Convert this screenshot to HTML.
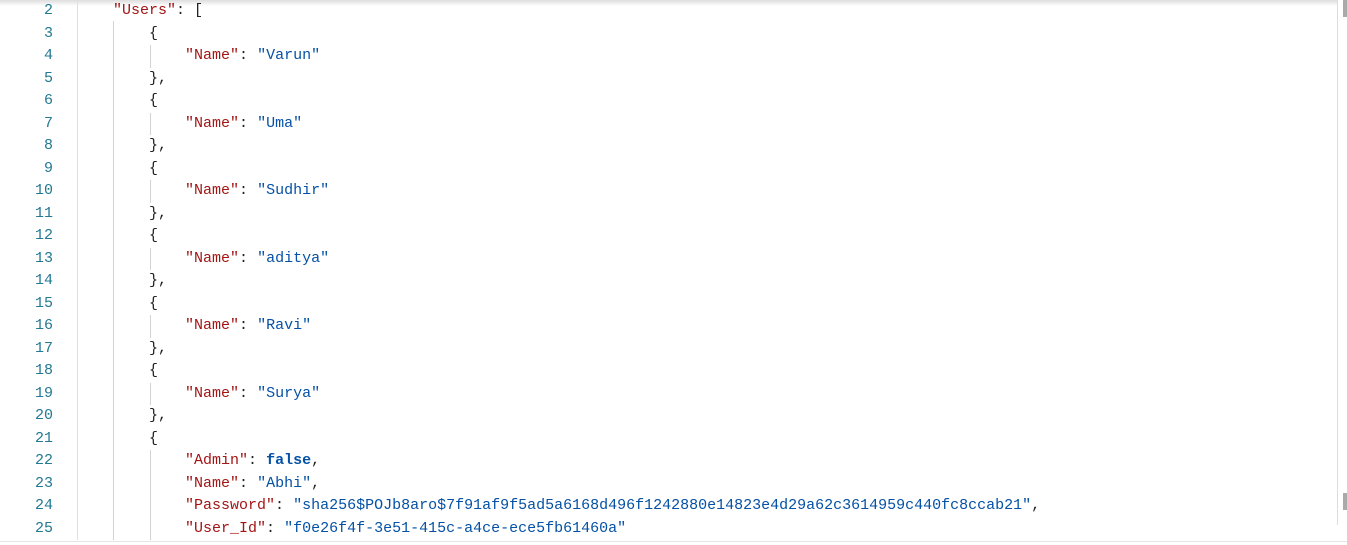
<!DOCTYPE html>
<html><head><style>
html,body{margin:0;padding:0;width:1347px;height:545px;overflow:hidden;background:#fff;}
.top{position:absolute;left:0;top:0;width:1337px;height:6px;background:linear-gradient(#ddd,#fff);}
.gutter{position:absolute;left:0;top:0;width:77px;height:540px;border-right:1px solid #e0e0e0;}
.ln{position:absolute;left:0;width:53px;text-align:right;color:#237893;}
.code{position:absolute;left:0;}
.row{position:absolute;height:22.5px;line-height:22.5px;font-family:"Liberation Mono",monospace;font-size:15px;white-space:pre;}
.k{color:#a31515;}.s{color:#0451a5;}.b{color:#0451a5;font-weight:bold;}.p{color:#222;}
.guide{position:absolute;width:1px;background:#d3d3d3;}
.sb{position:absolute;left:1337px;top:0;width:1px;height:525px;background:#ddd;}
.th{position:absolute;left:1343px;width:4px;height:17px;background:#aaa;}
.bot{position:absolute;left:0;top:541px;width:1347px;height:1px;background:#e5e5e5;}
</style></head><body>
<div class="top"></div>
<div class="gutter"></div>
<div class="guide" style="left:113px;top:21px;height:519px"></div>
<div id="g"></div>
<div id="c"></div>
<div class="sb"></div>
<div class="th" style="top:0"></div>
<div class="th" style="top:493px"></div>
<div class="bot"></div>
<script>
var lines=[
'    <span class="k">"Users"</span><span class="p">: [</span>'
];
var names=["Varun","Uma","Sudhir","aditya","Ravi","Surya"];
names.forEach(function(n){
lines.push('        <span class="p">{</span>');
lines.push('            <span class="k">"Name"</span><span class="p">: </span><span class="s">"'+n+'"</span>');
lines.push('        <span class="p">},</span>');
});
lines.push('        <span class="p">{</span>');
lines.push('            <span class="k">"Admin"</span><span class="p">: </span><span class="b">false</span><span class="p">,</span>');
lines.push('            <span class="k">"Name"</span><span class="p">: </span><span class="s">"Abhi"</span><span class="p">,</span>');
lines.push('            <span class="k">"Password"</span><span class="p">: </span><span class="s">"sha256$POJb8aro$7f91af9f5ad5a6168d496f1242880e14823e4d29a62c3614959c440fc8ccab21"</span><span class="p">,</span>');
lines.push('            <span class="k">"User_Id"</span><span class="p">: </span><span class="s">"f0e26f4f-3e51-415c-a4ce-ece5fb61460a"</span>');
var h='',g='';
for(var i=0;i<lines.length;i++){
 var y=0+i*22.5;
 h+='<div class="row ln" style="top:'+y+'px">'+(i+2)+'</div>';
 h+='<div class="row code" style="left:77px;top:'+y+'px">'+lines[i]+'</div>';
}
for(var j=0;j<6;j++){var y0=(2+3*j)*22.5;g+='<div class="guide" style="left:150px;top:'+y0+'px;height:22.5px"></div>';}
g+='<div class="guide" style="left:150px;top:'+(20*22.5)+'px;height:90px"></div>';
document.getElementById('c').innerHTML=h;
document.getElementById('g').innerHTML=g;
</script>
</body></html>
